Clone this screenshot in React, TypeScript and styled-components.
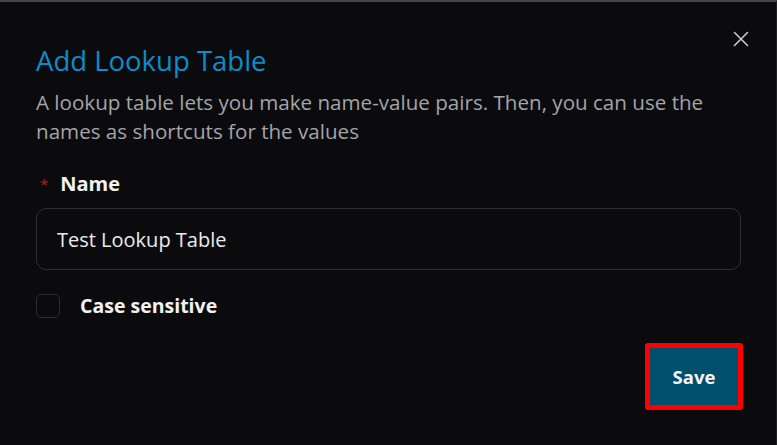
import React from "react";
import styled, { createGlobalStyle } from "styled-components";

const GlobalStyle = createGlobalStyle`
  html, body {
    margin: 0;
    padding: 0;
    background: #0b0b0e;
  }
  body {
    font-family: "Open Sans", "Noto Sans", "Liberation Sans", sans-serif;
    -webkit-font-smoothing: antialiased;
  }
  * { box-sizing: border-box; }
`;

const Modal = styled.div`
  position: relative;
  width: 777px;
  height: 445px;
  background: #0b0b0e;
  border-top: 2px solid #474749;
  border-right: 1px solid #1f1f23;
  padding: 42px 35px 0 36px;
  display: flex;
  flex-direction: column;
`;

const CloseButton = styled.button`
  position: absolute;
  top: 29px;
  right: 27px;
  width: 16px;
  height: 16px;
  padding: 0;
  border: none;
  background: transparent;
  color: #c9c9cc;
  cursor: pointer;
  display: flex;
`;

const Title = styled.h2`
  margin: 0;
  font-size: 27.5px;
  line-height: 34px;
  font-weight: 400;
  color: #0b8dcb;
`;

const Description = styled.p`
  margin: 10px 0 0;
  font-size: 20.6px;
  line-height: 29px;
  color: #a4a4a9;
  max-width: 700px;
`;

const Field = styled.div`
  margin-top: 25px;
  display: flex;
  flex-direction: column;
  gap: 11px;
`;

const Label = styled.label`
  display: flex;
  align-items: center;
  gap: 12px;
  font-size: 20px;
  line-height: 26px;
  font-weight: 700;
  color: #f2f2f2;
`;

const Required = styled.span`
  color: #c4161c;
  font-size: 15px;
  font-weight: 400;
  margin-left: 4px;
`;

const Input = styled.input`
  width: 100%;
  height: 62px;
  padding: 0 20px;
  border: 1px solid #2f2f33;
  border-radius: 10px;
  background: #0b0b0e;
  color: #ececee;
  font-family: inherit;
  font-size: 20px;
  outline: none;
`;

const CheckRow = styled.label`
  margin-top: 23px;
  display: flex;
  align-items: center;
  gap: 20px;
  font-size: 19.5px;
  line-height: 26px;
  font-weight: 700;
  color: #f2f2f2;
`;

const CheckBox = styled.span`
  width: 24px;
  height: 24px;
  border: 1.5px solid #2c2c30;
  border-radius: 5px;
  background: #0b0b0e;
`;

const Footer = styled.div`
  margin-top: 24px;
  margin-right: -2px;
  display: flex;
  justify-content: flex-end;
`;

const SaveButton = styled.button`
  width: 98px;
  height: 67px;
  border: 5px solid #ff0000;
  border-radius: 3px;
  background: #004f6d;
  color: #f4f4f4;
  font-family: inherit;
  font-size: 18.5px;
  font-weight: 700;
  cursor: pointer;
  padding: 0;
`;

export default function App() {
  return (
    <>
      <GlobalStyle />
      <Modal>
        <CloseButton aria-label="Close">
          <svg width="16" height="16" viewBox="0 0 16 16" fill="none">
            <path d="M1.5 1.5 L14.5 14.5 M14.5 1.5 L1.5 14.5" stroke="currentColor" strokeWidth="1.6" strokeLinecap="round" />
          </svg>
        </CloseButton>
        <Title>Add Lookup Table</Title>
        <Description>
          A lookup table lets you make name-value pairs. Then, you can use the names as shortcuts for the values
        </Description>
        <Field>
          <Label>
            <Required>*</Required>
            Name
          </Label>
          <Input defaultValue="Test Lookup Table" />
        </Field>
        <CheckRow>
          <CheckBox />
          Case sensitive
        </CheckRow>
        <Footer>
          <SaveButton>Save</SaveButton>
        </Footer>
      </Modal>
    </>
  );
}
